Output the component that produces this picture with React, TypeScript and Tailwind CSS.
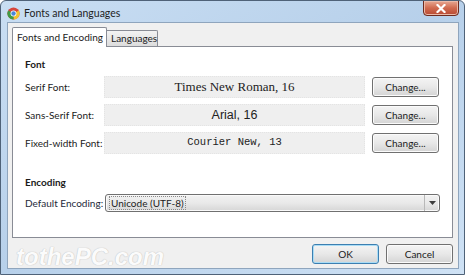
import React from "react";

const ui = "font-['Lato','Noto_Sans',sans-serif]";

function ChromeIcon() {
  return (
    <svg width="13" height="13" viewBox="0 0 16 16">
      <circle cx="8" cy="8" r="7.5" fill="#d6453b" />
      <path d="M8 8 L14.5 4.25 A7.5 7.5 0 0 1 8 15.5 Z" fill="#f2c330" />
      <path d="M8 8 L8 15.5 A7.5 7.5 0 0 1 1.5 4.25 Z" fill="#3f9b45" />
      <circle cx="8" cy="8" r="3.6" fill="#fff" />
      <circle cx="8" cy="8" r="2.7" fill="#4a86d8" />
    </svg>
  );
}

function WinButton({ label, primary = false }: { label: string; primary?: boolean }) {
  return (
    <div
      className={`w-[67px] h-[20px] rounded-[3px] border flex items-center justify-center text-[10px] text-[#1b1b1b] bg-gradient-to-b from-[#f4f4f4] via-[#e8e8e8] to-[#d4d4d4] ${
        primary
          ? "border-[#3c7fb1] shadow-[inset_0_0_0_1px_#a9dcf5]"
          : "border-[#707070] shadow-[inset_0_0_0_1px_#fbfbfb]"
      }`}
    >
      {label}
    </div>
  );
}

function FontRow({
  label,
  value,
  valueClass,
}: {
  label: string;
  value: string;
  valueClass: string;
}) {
  return (
    <div className="flex items-center h-[22px]">
      <div className="w-[79px] whitespace-nowrap text-[10px] text-[#1b1b1b]">{label}</div>
      <div
        className={`w-[261px] h-full bg-[#efefef] border border-dotted border-[#e4e4e4] flex items-center justify-center whitespace-nowrap text-[#222] ${valueClass}`}
      >
        {value}
      </div>
      <div className="ml-[7px]">
        <WinButton label="Change..." />
      </div>
    </div>
  );
}

export default function App() {
  return (
    <div
      className={`relative w-[465px] h-[275px] overflow-hidden rounded-t-[6px] border border-[#4f6278] bg-gradient-to-br from-[#c9def3] via-[#b7d0ea] to-[#cfe2f5] flex flex-col pl-[6px] ${ui}`}
    >
      {/* title bar */}
      <div className="h-[21px] flex items-start">
        <div className="mt-[6px]">
          <ChromeIcon />
        </div>
        <div className="ml-[4px] mt-[5px] whitespace-nowrap text-[10.5px] leading-[14px] text-[#1e1e1e]">
          Fonts and Languages
        </div>
        <div className="ml-auto mr-[5px] -mt-[1px] w-[36px] h-[16px] rounded-b-[4px] border border-[#6e2b1f] bg-gradient-to-b from-[#e6a893] via-[#d06a4f] to-[#b84a33] flex items-center justify-center shadow-[inset_0_0_0_1px_#eab9a8]">
          <svg width="10" height="9" viewBox="0 0 10 9">
            <path d="M1.5 1 L8.5 8 M8.5 1 L1.5 8" stroke="#fff" strokeWidth="2.2" strokeLinecap="square" />
          </svg>
        </div>
      </div>

      {/* client area */}
      <div className="w-[452px] h-[247px] border border-[#8fa5bd] bg-[#f0f0f0] flex flex-col pl-[4px] pt-[4px]">
        {/* tabs */}
        <div className="flex items-end h-[19px] relative z-10">
          <div className="h-[20px] -mb-[1px] w-[95px] bg-white border border-b-0 border-[#898c95] rounded-t-[2px] flex items-center pl-[4px] whitespace-nowrap text-[10px] text-[#1b1b1b]">
            Fonts and Encoding
          </div>
          <div className="h-[16px] w-[51px] border border-l-0 border-b-0 border-[#898c95] rounded-tr-[2px] bg-gradient-to-b from-[#f3f3f3] to-[#dcdcdc] flex items-center pl-[4px] whitespace-nowrap text-[10px] text-[#1b1b1b]">
            Languages
          </div>
        </div>

        {/* panel */}
        <div className="w-[441px] h-[192px] bg-white border border-[#898c95] pl-[12px] pt-[11px] flex flex-col">
          <div className="text-[10px] leading-[13px] font-bold text-[#1b1b1b]">Font</div>
          <div className="mt-[5px] flex flex-col gap-[6px]">
            <FontRow
              label="Serif Font:"
              value="Times New Roman, 16"
              valueClass="font-['Liberation_Serif',serif] text-[13px]"
            />
            <FontRow
              label="Sans-Serif Font:"
              value="Arial, 16"
              valueClass="font-['Liberation_Sans',sans-serif] text-[12.5px]"
            />
            <FontRow
              label="Fixed-width Font:"
              value="Courier New, 13"
              valueClass="font-['Liberation_Mono',monospace] text-[10.5px]"
            />
          </div>

          <div className="mt-[22px] text-[10px] leading-[13px] font-bold text-[#1b1b1b]">Encoding</div>
          <div className="mt-[5px] flex items-center h-[18px]">
            <div className="w-[80px] whitespace-nowrap text-[10px] text-[#1e2a3a]">Default Encoding:</div>
            <div className="w-[335px] h-full rounded-[3px] border border-[#707070] bg-gradient-to-b from-[#f2f2f2] via-[#e9e9e9] to-[#d6d6d6] flex items-center shadow-[inset_0_0_0_1px_#fafafa]">
              <div className="flex-1 h-full flex items-center pl-[3px] text-[10px] text-[#1b1b1b]">
                <span className="border border-dotted border-[#8a8a8a] px-[1px] leading-[12px]">
                  Unicode (UTF-8)
                </span>
              </div>
              <div className="w-[15px] h-full border-l border-[#b8b8b8] flex items-center justify-center">
                <svg width="7" height="4" viewBox="0 0 7 4">
                  <path d="M0 0 L7 0 L3.5 4 Z" fill="#3d3d3d" />
                </svg>
              </div>
            </div>
          </div>
        </div>

        {/* dialog buttons */}
        <div className="w-[441px] flex justify-end gap-[7px] mt-[6px]">
          <WinButton label="OK" primary />
          <WinButton label="Cancel" />
        </div>
      </div>

      {/* watermark */}
      <div className="absolute left-[15px] bottom-[4px] text-[24px] leading-[26px] font-bold italic text-[#fbfbfb] font-['Liberation_Sans',sans-serif] [text-shadow:0_0_1px_#bdbdbd,0_0_1px_#cfcfcf] pointer-events-none">
        tothePC.com
      </div>
    </div>
  );
}
